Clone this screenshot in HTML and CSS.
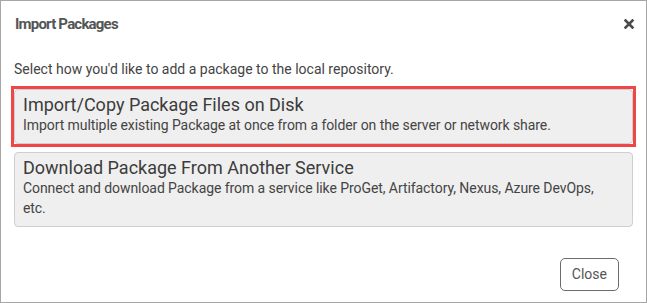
FILE: index.html
```html
<!DOCTYPE html>
<html lang="en">
<head>
    <meta charset="UTF-8">
    <meta name="viewport" content="width=device-width, initial-scale=1.0">
    <title>Import Packages</title>
    <link rel="stylesheet" href="styles.css">
</head>
<body>
    <div class="dialog">
        <!-- Header -->
        <div class="dialog-header">
            <h2>Import Packages</h2>
            <a class="close-x" title="Close">
                <svg width="10" height="10" viewBox="0 0 10 10">
                    <path d="M1.5 1.5 L8.5 8.5 M8.5 1.5 L1.5 8.5" stroke="#4a4a4a" stroke-width="2.6" stroke-linecap="square"/>
                </svg>
            </a>
        </div>

        <!-- Body -->
        <div class="dialog-body">
            <p class="intro">Select how you'd like to add a package to the local repository.</p>

            <div class="highlight">
                <div class="option">
                    <div class="option-title">Import/Copy Package Files on Disk</div>
                    <div class="option-desc">Import multiple existing Package at once from a folder on the server or network share.</div>
                </div>
            </div>

            <div class="option">
                <div class="option-title">Download Package From Another Service</div>
                <div class="option-desc">Connect and download Package from a service like ProGet, Artifactory, Nexus, Azure DevOps, etc.</div>
            </div>
        </div>

        <!-- Footer -->
        <div class="dialog-footer">
            <button type="button">Close</button>
        </div>
    </div>
</body>
</html>
```

FILE: styles.css
```css
* {
    margin: 0;
    padding: 0;
    box-sizing: border-box;
    font-family: Roboto, 'Liberation Sans', sans-serif;
}

body {
    background: #fff;
}

.dialog {
    width: 647px;
    height: 303px;
    border: 1px solid #a6a6a6;
    display: flex;
    flex-direction: column;
}

.dialog-header {
    display: flex;
    justify-content: space-between;
    align-items: center;
    padding: 13px 12px 12px 14px;
}

h2 {
    font-size: 15px;
    line-height: 20px;
    font-weight: bold;
    letter-spacing: -0.8px;
    color: #555;
}

.close-x {
    display: flex;
    cursor: pointer;
}

.dialog-body {
    padding: 13px 13px 0 13px;
}

.intro {
    font-size: 14px;
    line-height: 20px;
    color: #444;
    margin-bottom: 10px;
}

.highlight {
    border: 3px solid #f04646;
    margin: -3px -3px 5px;
}

.option {
    background: #efefef;
    border: 1px solid #cfcfcf;
    border-radius: 4px;
    padding: 5px 16px 8px 8px;
    color: #444;
    cursor: pointer;
}

.option-title {
    font-size: 18px;
    line-height: 20px;
    color: #3c3c3c;
}

.option-desc {
    font-size: 14px;
    line-height: 20px;
    letter-spacing: -0.07px;
}

.dialog-footer {
    display: flex;
    justify-content: flex-end;
    padding: 31px 27px 0 0;
}

button {
    font-size: 14px;
    line-height: 17px;
    padding: 7px 11px;
    color: #555;
    background: #fff;
    border: 1px solid #6b6b6b;
    border-radius: 5px;
    cursor: pointer;
}
```
